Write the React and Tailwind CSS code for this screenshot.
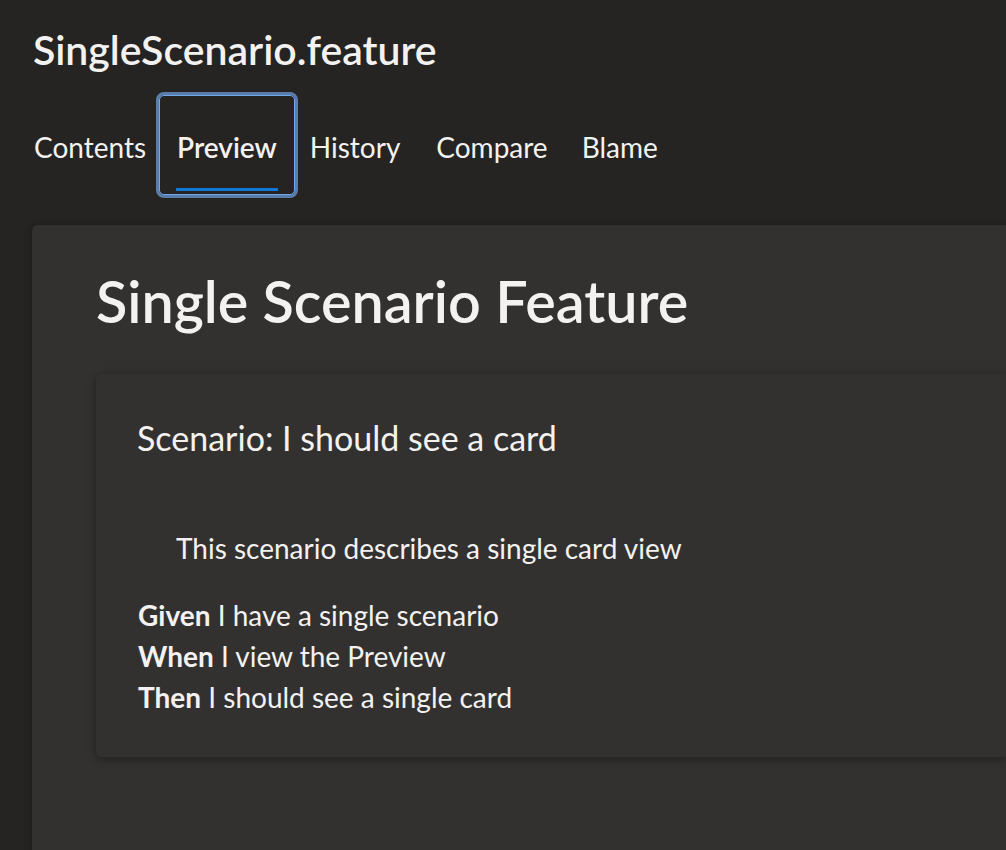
export default function App() {
  const font = { fontFamily: 'Lato, "Open Sans", sans-serif' };
  return (
    <div className="h-[850px] w-[1006px] overflow-hidden bg-[#252423] text-[#f3f2f1]" style={font}>
      <div className="pl-[33px] pt-[24px]">
        <h1 className="text-[41px] leading-[52px] font-semibold">SingleScenario.feature</h1>
      </div>
      <div className="mt-[16px] flex items-stretch pl-[22px] h-[106px]">
        <div className="flex items-center pl-[12px] pr-[10px] pt-[3px] text-[28px]">Contents</div>
        <div className="relative flex items-center justify-center rounded-[8px] border-[3px] border-[#5a7dab] px-[18px] pt-[3px]">
          <div className="absolute inset-0 rounded-[5px] border border-[#6ea8ee]" />
          <span className="text-[28px] font-semibold">Preview</span>
          <div className="absolute bottom-[4px] left-[17px] right-[17px] h-[3px] bg-[#0f78d4]" />
        </div>
        <div className="flex items-center pl-[12px] pr-[15px] pt-[3px] text-[28px]">History</div>
        <div className="flex items-center pl-[21px] pr-[20px] pt-[3px] text-[28px]">Compare</div>
        <div className="flex items-center px-[14px] pt-[3px] text-[28px]">Blame</div>
      </div>
      <div className="ml-[32px] mt-[27px] h-[700px] rounded-tl-[6px] bg-[#323130] pl-[64px] pt-[46px] shadow-[0_0_6px_rgba(0,0,0,0.3)]">
        <h2 className="text-[57.5px] leading-[60px] font-semibold">Single Scenario Feature</h2>
        <div className="mt-[43px] h-[383px] rounded-l-[6px] bg-[#323130] pl-[41px] pt-[42px] shadow-[0_2px_8px_rgba(0,0,0,0.35)]">
          <div className="text-[34px] leading-[44px]">Scenario: I should see a card</div>
          <div className="mt-[72px] pl-[39px] text-[28px] leading-[32px]">This scenario describes a single card view</div>
          <div className="mt-[31px] pl-[1px] text-[28px] leading-[41px]">
            <div><span className="font-bold">Given</span> I have a single scenario</div>
            <div><span className="font-bold">When</span> I view the Preview</div>
            <div><span className="font-bold">Then</span> I should see a single card</div>
          </div>
        </div>
      </div>
    </div>
  );
}
